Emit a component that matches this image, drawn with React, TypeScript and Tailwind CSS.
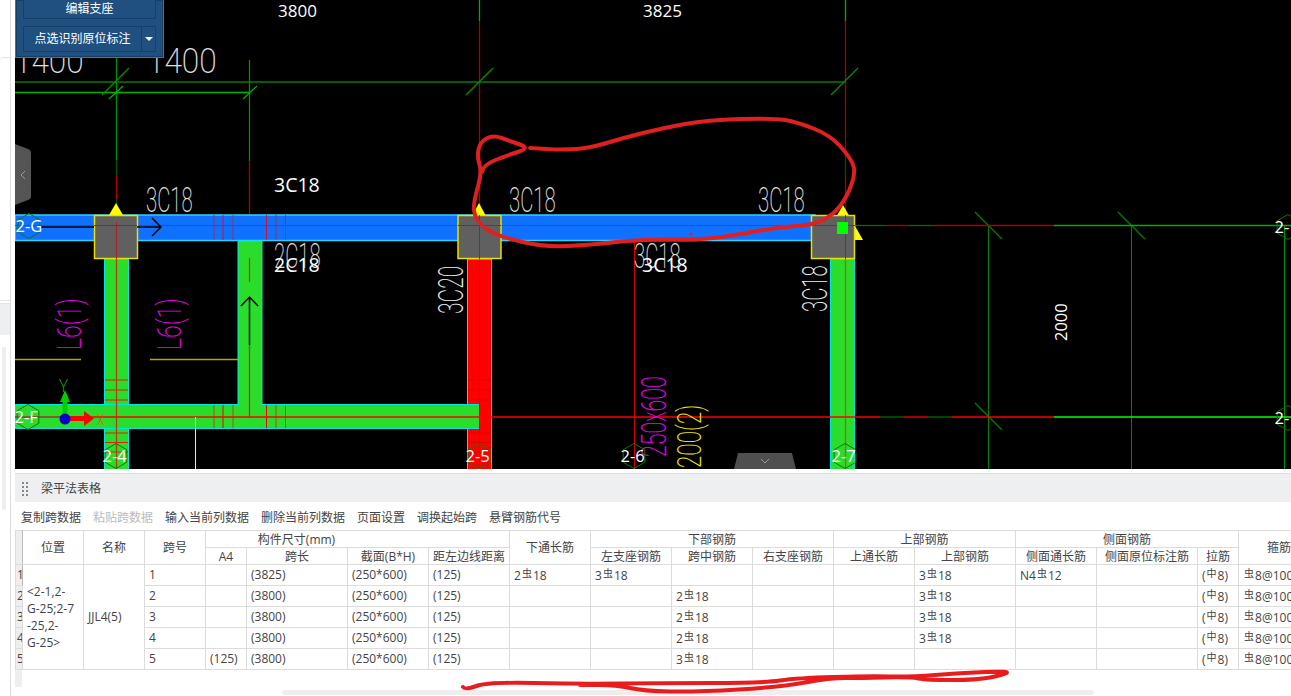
import React from 'react';

const columns = [7, 61, 61, 61, 41, 101, 81, 81, 81, 81, 81, 81, 81, 101, 81, 101, 41, 81];

const rows = [
  ['1', '', '(3825)', '(250*600)', '(125)', '2#18', '3#18', '', '', '', '3#18', 'N4#12', '', '(~8)', '#8@100(2)'],
  ['2', '', '(3800)', '(250*600)', '(125)', '', '', '2#18', '', '', '3#18', '', '', '(~8)', '#8@100(2)'],
  ['3', '', '(3800)', '(250*600)', '(125)', '', '', '2#18', '', '', '3#18', '', '', '(~8)', '#8@100(2)'],
  ['4', '', '(3800)', '(250*600)', '(125)', '', '', '2#18', '', '', '3#18', '', '', '(~8)', '#8@100(2)'],
  ['5', '(125)', '(3800)', '(250*600)', '(125)', '', '', '3#18', '', '', '', '', '', '(~8)', '#8@100(2)'],
];

const tools = ['复制跨数据', '粘贴跨数据', '输入当前列数据', '删除当前列数据', '页面设置', '调换起始跨', '悬臂钢筋代号'];

// turns "2#18" into text with the small steel grade glyph
function RebarText({ value }: { value: string }) {
  const parts = value.split(/([#~])/);
  return (
    <>
      {parts.map((part, i) =>
        part === '#' || part === '~' ? (
          <span key={i} className="text-[10px] align-[3px] mx-px">
            {part === '#' ? '虫' : '中'}
          </span>
        ) : (
          <span key={i}>{part}</span>
        )
      )}
    </>
  );
}

function Th({ children, rowSpan, colSpan, extra = '' }: { children?: React.ReactNode; rowSpan?: number; colSpan?: number; extra?: string }) {
  return (
    <th rowSpan={rowSpan} colSpan={colSpan} className={`border border-[#dcdcdc] font-normal text-xs leading-none text-[#444] p-0 pt-px whitespace-nowrap overflow-hidden ${extra}`}>
      {children}
    </th>
  );
}

function T({ x, y, size, sx = 1, rot = 0, fill = '#fff', thin = false, children }: { x: number; y: number; size: number; sx?: number; rot?: number; fill?: string; thin?: boolean; children: React.ReactNode }) {
  return (
    <text
      transform={`translate(${x} ${y}) rotate(${rot}) scale(${sx} 1)`}
      fontSize={size}
      fill={fill}
      className={thin ? "font-['Roboto'] font-extralight" : "font-['Open_Sans']"}
    >
      {children}
    </text>
  );
}

function L({ p, c, w = 1 }: { p: number[]; c: string; w?: number }) {
  return <line x1={p[0]} y1={p[1]} x2={p[2]} y2={p[3]} stroke={c} strokeWidth={w} />;
}

function Hex({ cx, cy, label }: { cx: number; cy: number; label: string }) {
  const r = 12.5;
  const h = r * 0.866;
  return (
    <g>
      <polygon points={`${cx},${cy - r} ${cx + h},${cy - r / 2} ${cx + h},${cy + r / 2} ${cx},${cy + r} ${cx - h},${cy + r / 2} ${cx - h},${cy - r / 2}`} fill="none" stroke="#0a7a0a" />
      <T x={cx - 13.5} y={cy + 6} size={16.5}>{label}</T>
    </g>
  );
}

function Beam({ x, y, w, h }: { x: number; y: number; w: number; h: number }) {
  return <rect x={x} y={y} width={w} height={h} fill="#2bdd2b" stroke="#00e6e6" />;
}

function Column({ x }: { x: number }) {
  return <rect x={x + 0.5} y={215.5} width={43} height={43} fill="#606060" stroke="#e8e000" strokeWidth={1.5} />;
}

function smooth(pts: number[][]) {
  let d = `M${pts[0][0]} ${pts[0][1]}`;
  for (let i = 1; i < pts.length - 1; i++) {
    const mx = (pts[i][0] + pts[i + 1][0]) / 2;
    const my = (pts[i][1] + pts[i + 1][1]) / 2;
    d += ` Q${pts[i][0]} ${pts[i][1]} ${mx} ${my}`;
  }
  const last = pts[pts.length - 1];
  return d + ` L${last[0]} ${last[1]}`;
}

const ring = [[482, 172], [483, 165], [508, 155], [530, 148], [510, 141], [493, 135], [480, 142], [477, 157], [482, 172], [475, 197], [473, 213], [483, 228], [502, 237], [543, 247], [590, 245], [643, 239], [703, 240], [747, 233], [780, 227], [813, 225], [833, 215], [847, 197], [856, 172], [850, 157], [830, 135], [797, 122], [773, 118], [707, 120], [663, 128], [623, 138], [590, 148], [563, 150], [530, 148]];

const scrawl = [[463, 687], [465, 690], [488, 682], [580, 684], [663, 683], [763, 683], [797, 678], [870, 676], [910, 677], [960, 673], [1010, 671], [1003, 675], [977, 680], [927, 680], [910, 677], [860, 678], [830, 678], [780, 687], [697, 692], [643, 691], [617, 685], [580, 685]];

function Drawing() {
  return (
    <svg viewBox="15 0 1276 469" className="block w-full h-full">
      {/* grid lines */}
      <L p={[15, 82, 845, 82]} c="#0a5a00" w={2} />
      <L p={[15, 92.5, 250, 92.5]} c="#00b400" w={1.5} />
      <L p={[116.5, 58, 116.5, 160]} c="#009000" w={1.3} />
      <L p={[116.5, 160, 116.5, 175]} c="#064f00" w={1.3} />
      <L p={[116.5, 175, 116.5, 200]} c="#aa0000" w={1.3} />
      <L p={[116.5, 200, 116.5, 215]} c="#064f00" w={1.3} />
      <L p={[249.5, 60, 249.5, 161]} c="#009000" w={1.3} />
      <L p={[249.5, 161, 249.5, 234]} c="#b00000" w={1.3} />
      <L p={[479.5, 0, 479.5, 21]} c="#00b000" w={1.3} />
      <L p={[479.5, 21, 479.5, 215]} c="#aa0000" w={1.3} />
      <L p={[845.5, 0, 845.5, 21]} c="#00b000" w={1.3} />
      <L p={[845.5, 21, 845.5, 155]} c="#aa0000" w={1.3} />
      <L p={[845.5, 155, 845.5, 175]} c="#064f00" w={1.3} />
      <L p={[845.5, 175, 845.5, 215]} c="#aa0000" w={1.3} />
      <L p={[102, 95, 129, 68]} c="#009000" w={1.2} />
      <L p={[109, 99, 123, 86]} c="#00b400" w={1.2} />
      <L p={[243, 99, 257, 86]} c="#00b400" w={1.2} />
      <L p={[466, 95, 493, 68]} c="#009000" w={1.2} />
      <L p={[831, 95, 858, 68]} c="#009000" w={1.2} />
      <L p={[988.5, 225, 988.5, 469]} c="#008000" />
      <L p={[1131.5, 225, 1131.5, 469]} c="#008000" />
      <L p={[1284.5, 225, 1284.5, 469]} c="#009000" />
      <L p={[975, 212, 1002, 239]} c="#008000" w={1.2} />
      <L p={[1118, 212, 1145, 239]} c="#008000" w={1.2} />
      <L p={[975, 403, 1002, 430]} c="#008000" w={1.2} />
      <L p={[855, 225.5, 885, 225.5]} c="#007000" w={1.3} />
      <L p={[885, 225.5, 909, 225.5]} c="#b00000" w={1.3} />
      <L p={[909, 225.5, 933, 225.5]} c="#007000" w={1.3} />
      <L p={[933, 225.5, 1054, 225.5]} c="#b00000" w={1.3} />
      <L p={[1054, 225.5, 1291, 225.5]} c="#00b000" w={1.3} />
      <L p={[15, 359.5, 81, 359.5]} c="#b0a800" w={1.3} />
      <L p={[150, 359.5, 249, 359.5]} c="#b0a800" w={1.3} />
      <L p={[634.5, 225, 634.5, 469]} c="#d00000" w={1.2} />

      {/* beams and columns */}
      <rect x={15} y={215} width={800} height={25.5} fill="#1070ff" stroke="#30d0ff" strokeWidth={1.5} />
      <Beam x={104.5} y={259} w={24} h={212} />
      <Beam x={238} y={241} w={24} h={176} />
      <rect x={467.5} y={259} width={24} height={212} fill="#ff0000" stroke="#00e6e6" />
      <Beam x={830.5} y={259} w={24} h={212} />
      <rect x={15} y={404.5} width={464} height={24} fill="#2bdd2b" stroke="#00e6e6" />
      <rect x={105} y={405} width={23} height={23} fill="#2bdd2b" />
      <rect x={239} y={400} width={22} height={28} fill="#2bdd2b" />
      <rect x={473} y={405} width={6} height={23} fill="#2bdd2b" />

      {/* rebar ticks */}
      {[214, 233, 276, 285.5].map(x => (
        <g key={x}>
          <L p={[x, 215, x, 240]} c="#a0304f" />
          <L p={[x, 405, x, 428]} c="#b04a20" />
        </g>
      ))}
      {[223, 266.5].map(x => (
        <g key={x}>
          <L p={[x, 215, x, 240]} c="#d01030" />
          <L p={[x, 405, x, 428]} c="#f00000" />
        </g>
      ))}
      {[380, 390, 400, 433, 442.5, 452].map(y => (
        <L key={y} p={[105, y, 128, y]} c="#e02000" />
      ))}
      {[380, 390, 400, 433, 442.5, 452].map(y => (
        <L key={y} p={[468, y, 491, y]} c="#e00000" />
      ))}
      <L p={[116.5, 259, 116.5, 469]} c="#b83a10" w={1.3} />
      <L p={[845.5, 259, 845.5, 469]} c="#b05a20" w={1.3} />
      <L p={[479.5, 259, 479.5, 469]} c="#e80000" />
      <L p={[249.5, 258, 249.5, 282]} c="#a04a10" w={1.3} />
      <L p={[249.5, 345, 249.5, 417]} c="#c03010" w={1.3} />
      <L p={[15, 225.5, 855, 225.5]} c="#b02040" w={1.2} />
      <L p={[15, 417, 60, 417]} c="#a03030" w={1.3} />
      <L p={[60, 417, 880, 417]} c="#ff0000" w={1.3} />
      <L p={[880, 417, 904, 417]} c="#007000" w={1.3} />
      <L p={[904, 417, 928, 417]} c="#ff0000" w={1.3} />
      <L p={[928, 417, 952, 417]} c="#007000" w={1.3} />
      <L p={[952, 417, 1054, 417]} c="#ff0000" w={1.3} />
      <L p={[1054, 417, 1291, 417]} c="#00ff00" w={1.3} />
      <L p={[195.5, 417, 195.5, 469]} c="#ffff40" />
      <circle cx={691} cy={234} r={1.5} fill="#e02020" />

      {/* supports */}
      <polygon points="116,203 123,215 109,215" fill="#ffff00" />
      <polygon points="479,203 486,216 472,216" fill="#ffff00" />
      <polygon points="843,205 863,240 823,240" fill="#ffff00" />
      <Column x={94} />
      <Column x={457.5} />
      <Column x={811} />
      <L p={[116.5, 222, 116.5, 259]} c="#b02020" />
      <L p={[479.5, 215, 479.5, 259]} c="#a02020" />
      <L p={[845.5, 215, 845.5, 259]} c="#a02020" />
      <L p={[94, 225.5, 137, 225.5]} c="#a02020" />
      <L p={[458, 225.5, 501, 225.5]} c="#a02020" />
      <L p={[811, 225.5, 855, 225.5]} c="#a02020" />
      <rect x={837} y={222} width={11} height={12} fill="#00ff00" />

      {/* direction arrows */}
      <L p={[40, 227, 94, 227]} c="#000" w={1.5} />
      <path d="M137 227H160M152 218l9 9-9 9" fill="none" stroke="#000" strokeWidth={1.5} />
      <path d="M249.5 345V298M241 306l8.5-9 8.5 9" fill="none" stroke="#000" strokeWidth={1.5} />

      {/* dimensions and labels */}
      <T x={278} y={17} size={17}>3800</T>
      <T x={643} y={17} size={17}>3825</T>
      <T x={14} y={73} size={36} sx={0.88} fill="#e0e0e0" thin>1400</T>
      <T x={147} y={73} size={36} sx={0.88} fill="#e0e0e0" thin>1400</T>
      <T x={274} y={192} size={19.5}>3C18</T>
      <T x={146} y={212} size={35} sx={0.58} fill="#e0e0e0" thin>3C18</T>
      <T x={509} y={212} size={35} sx={0.58} fill="#e0e0e0" thin>3C18</T>
      <T x={758} y={212} size={35} sx={0.58} fill="#e0e0e0" thin>3C18</T>
      <T x={274} y={268} size={35} sx={0.58} fill="#e0e0e0" thin>2C18</T>
      <T x={274} y={272} size={19.5}>2C18</T>
      <T x={634} y={268} size={35} sx={0.58} fill="#e0e0e0" thin>3C18</T>
      <T x={642} y={272} size={19.5}>3C18</T>
      <T x={463} y={314} size={35} sx={0.6} rot={-90} fill="#f0f0f0" thin>3C20</T>
      <T x={827} y={312} size={35} sx={0.58} rot={-90} fill="#f0f0f0" thin>3C18</T>
      <T x={81} y={350} size={34} sx={0.68} rot={-90} fill="#f000f0" thin>L6(1)</T>
      <T x={181} y={350} size={34} sx={0.68} rot={-90} fill="#f000f0" thin>L6(1)</T>
      <T x={666} y={457} size={35} sx={0.61} rot={-90} fill="#f000f0" thin>250x600</T>
      <T x={701} y={468} size={34} sx={0.66} rot={-90} fill="#f0e800" thin>200(2)</T>
      <T x={1067} y={341} size={16.5} rot={-90}>2000</T>

      <Hex cx={29} cy={226} label="2-G" />
      <Hex cx={28} cy={417} label="2-F" />
      <Hex cx={116} cy={456} label="2-4" />
      <Hex cx={479} cy={456} label="2-5" />
      <Hex cx={634} cy={456} label="2-6" />
      <Hex cx={845} cy={456} label="2-7" />
      <Hex cx={1288} cy={227} label="2-" />
      <Hex cx={1288} cy={418} label="2-" />

      {/* axis gizmo */}
      <path d="M62.5 414V402H60L65 390L70 402H67.5V414Z" fill="#00d000" />
      <path d="M70 416H84V411L94 418.5L84 426V421H70Z" fill="#ff0000" />
      <circle cx={65} cy={419} r={5.5} fill="#0000c8" />
      <T x={59} y={392} size={19} sx={0.8} fill="#00e000" thin>Y</T>
      <T x={97} y={425} size={15} sx={0.8} fill="#ff2020" thin>X</T>

      {/* collapse handles */}
      <path d="M15 144L28 149Q31 150 31 153V197Q31 199 28 200L15 205Z" fill="#555" />
      <path d="M25 171l-4 4 4 4" fill="none" stroke="#999" />
      <path d="M738 453H792L796 469H734Z" fill="#4f4f4f" />
      <path d="M761 459l4 4 4-4" fill="none" stroke="#999" />
    </svg>
  );
}

export default function App() {
  return (
    <div className="relative flex w-[1291px] h-[696px] overflow-hidden bg-white font-['Open_Sans','Noto_Sans_CJK_SC',sans-serif]">
      {/* left strip */}
      <div className="w-[15px] shrink-0">
        <div className="w-[11px] h-full border-r border-[#ddd]">
          <div className="h-[57px]" />
          <div className="h-[244px] border-t border-b border-[#e4e4e4] rounded-tl" />
          <div className="h-[2px]" />
          <div className="h-[32px] bg-[#eeeff1] border-t border-[#e4e4e4]" />
          <div className="h-[12px]" />
          <div className="ml-[2px] w-[4px] h-[163px] rounded-full bg-[#eee]" />
        </div>
      </div>

      <div className="flex-1 min-w-0">
        {/* drawing canvas */}
        <div className="relative h-[469px] bg-black overflow-hidden">
          <Drawing />

          {/* floating command panel */}
          <div className="absolute top-0 left-0 w-[149px] h-[58px] overflow-hidden flex flex-col justify-end gap-[7px] px-[7px] pb-[5px] bg-[#20507f] border-r border-b border-l border-[#3a76ab] shadow-[inset_0_0_0_1px_#174069]">
            <button className="h-[21px] shrink-0 flex items-center justify-center text-xs leading-none text-white bg-[#20507f] border border-[#174069]">
              编辑支座
            </button>
            <div className="flex h-[26px] shrink-0">
              <button className="w-[119px] flex items-center justify-center text-xs leading-none text-white border border-[#174069]">
                点选识别原位标注
              </button>
              <button className="flex-1 flex items-center justify-center border border-l-0 border-[#174069]">
                <svg width="8" height="4" viewBox="0 0 8 4">
                  <path d="M0 0H8L4 4Z" fill="#fff" />
                </svg>
              </button>
            </div>
          </div>
        </div>

        {/* beam table panel */}
        <div className="pt-[4px]">
          <div className="flex items-center h-[29px] pt-px bg-[#eeeff1] border-t border-[#ddd]">
            <div className="ml-[7px] grid grid-cols-2 gap-[2px]">
              {[0, 1, 2, 3, 4, 5, 6, 7].map(i => (
                <span key={i} className="w-[2px] h-[2px] bg-[#8a8a8a]" />
              ))}
            </div>
            <span className="ml-[13px] text-xs text-[#444]">梁平法表格</span>
          </div>

          <div className="flex items-center gap-3 h-[28px] pt-[4px] pl-[6px] text-xs">
            {tools.map((tool, i) => (
              <span key={tool} className={i === 1 ? 'text-[#bbb]' : 'text-[#444]'}>
                {tool}
              </span>
            ))}
          </div>

          <div className="overflow-hidden">
            <table className="table-fixed border-collapse w-[1303px] text-xs text-[#444]">
              <colgroup>
                {columns.map((w, i) => (
                  <col key={i} span={1} width={w} />
                ))}
              </colgroup>
              <thead>
                <tr className="h-[17px]">
                  <th rowSpan={2} className="border border-[#dcdcdc] border-r-[#bbb] bg-[#eee] p-0" />
                  <Th rowSpan={2}>位置</Th>
                  <Th rowSpan={2}>名称</Th>
                  <Th rowSpan={2}>跨号</Th>
                  <Th colSpan={4} extra="pr-[122px]">构件尺寸(mm)</Th>
                  <Th rowSpan={2}>下通长筋</Th>
                  <Th colSpan={3}>下部钢筋</Th>
                  <Th colSpan={2}>上部钢筋</Th>
                  <Th colSpan={3}>侧面钢筋</Th>
                  <Th rowSpan={2}>箍筋</Th>
                </tr>
                <tr className="h-[17px]">
                  {['A4', '跨长', '截面(B*H)', '距左边线距离', '左支座钢筋', '跨中钢筋', '右支座钢筋', '上通长筋', '上部钢筋', '侧面通长筋', '侧面原位标注筋', '拉筋'].map(h => (
                    <Th key={h}>{h}</Th>
                  ))}
                </tr>
              </thead>
              <tbody>
                {rows.map((row, r) => (
                  <tr key={r} className="h-[21px]">
                    <td className="border border-[#dcdcdc] border-r-[#bbb] bg-[#eee] p-0 pl-px leading-none overflow-hidden">{r + 1}</td>
                    {r === 0 && (
                      <>
                        <td rowSpan={5} className="border border-[#dcdcdc] p-0 pl-[4px] leading-[17px]">
                          &lt;2-1,2-
                          <br />
                          G-25;2-7
                          <br />
                          -25,2-
                          <br />
                          G-25&gt;
                        </td>
                        <td rowSpan={5} className="border border-[#dcdcdc] p-0 pl-[4px] leading-none">JJL4(5)</td>
                      </>
                    )}
                    {row.map((cell, c) => (
                      <td key={c} className="border border-[#dcdcdc] p-0 pl-[4px] leading-none whitespace-nowrap overflow-hidden">
                        <RebarText value={cell} />
                      </td>
                    ))}
                  </tr>
                ))}
              </tbody>
            </table>
          </div>

          <div className="w-[7px] h-[17px] bg-[#eee]" />
          <div className="ml-[267px] mt-[3px] w-[812px] h-[5px] rounded-full bg-[#eee]" />
        </div>
      </div>

      {/* red marker annotations drawn over the screenshot */}
      <svg viewBox="0 0 1291 696" className="absolute inset-0 w-full h-full pointer-events-none">
        <path d={smooth(ring)} fill="none" stroke="#e02020" strokeWidth={4} strokeLinejoin="round" strokeLinecap="round" />
        <path d={smooth(scrawl)} fill="none" stroke="#e81c1c" strokeWidth={4} strokeLinejoin="round" strokeLinecap="round" />
      </svg>
    </div>
  );
}
